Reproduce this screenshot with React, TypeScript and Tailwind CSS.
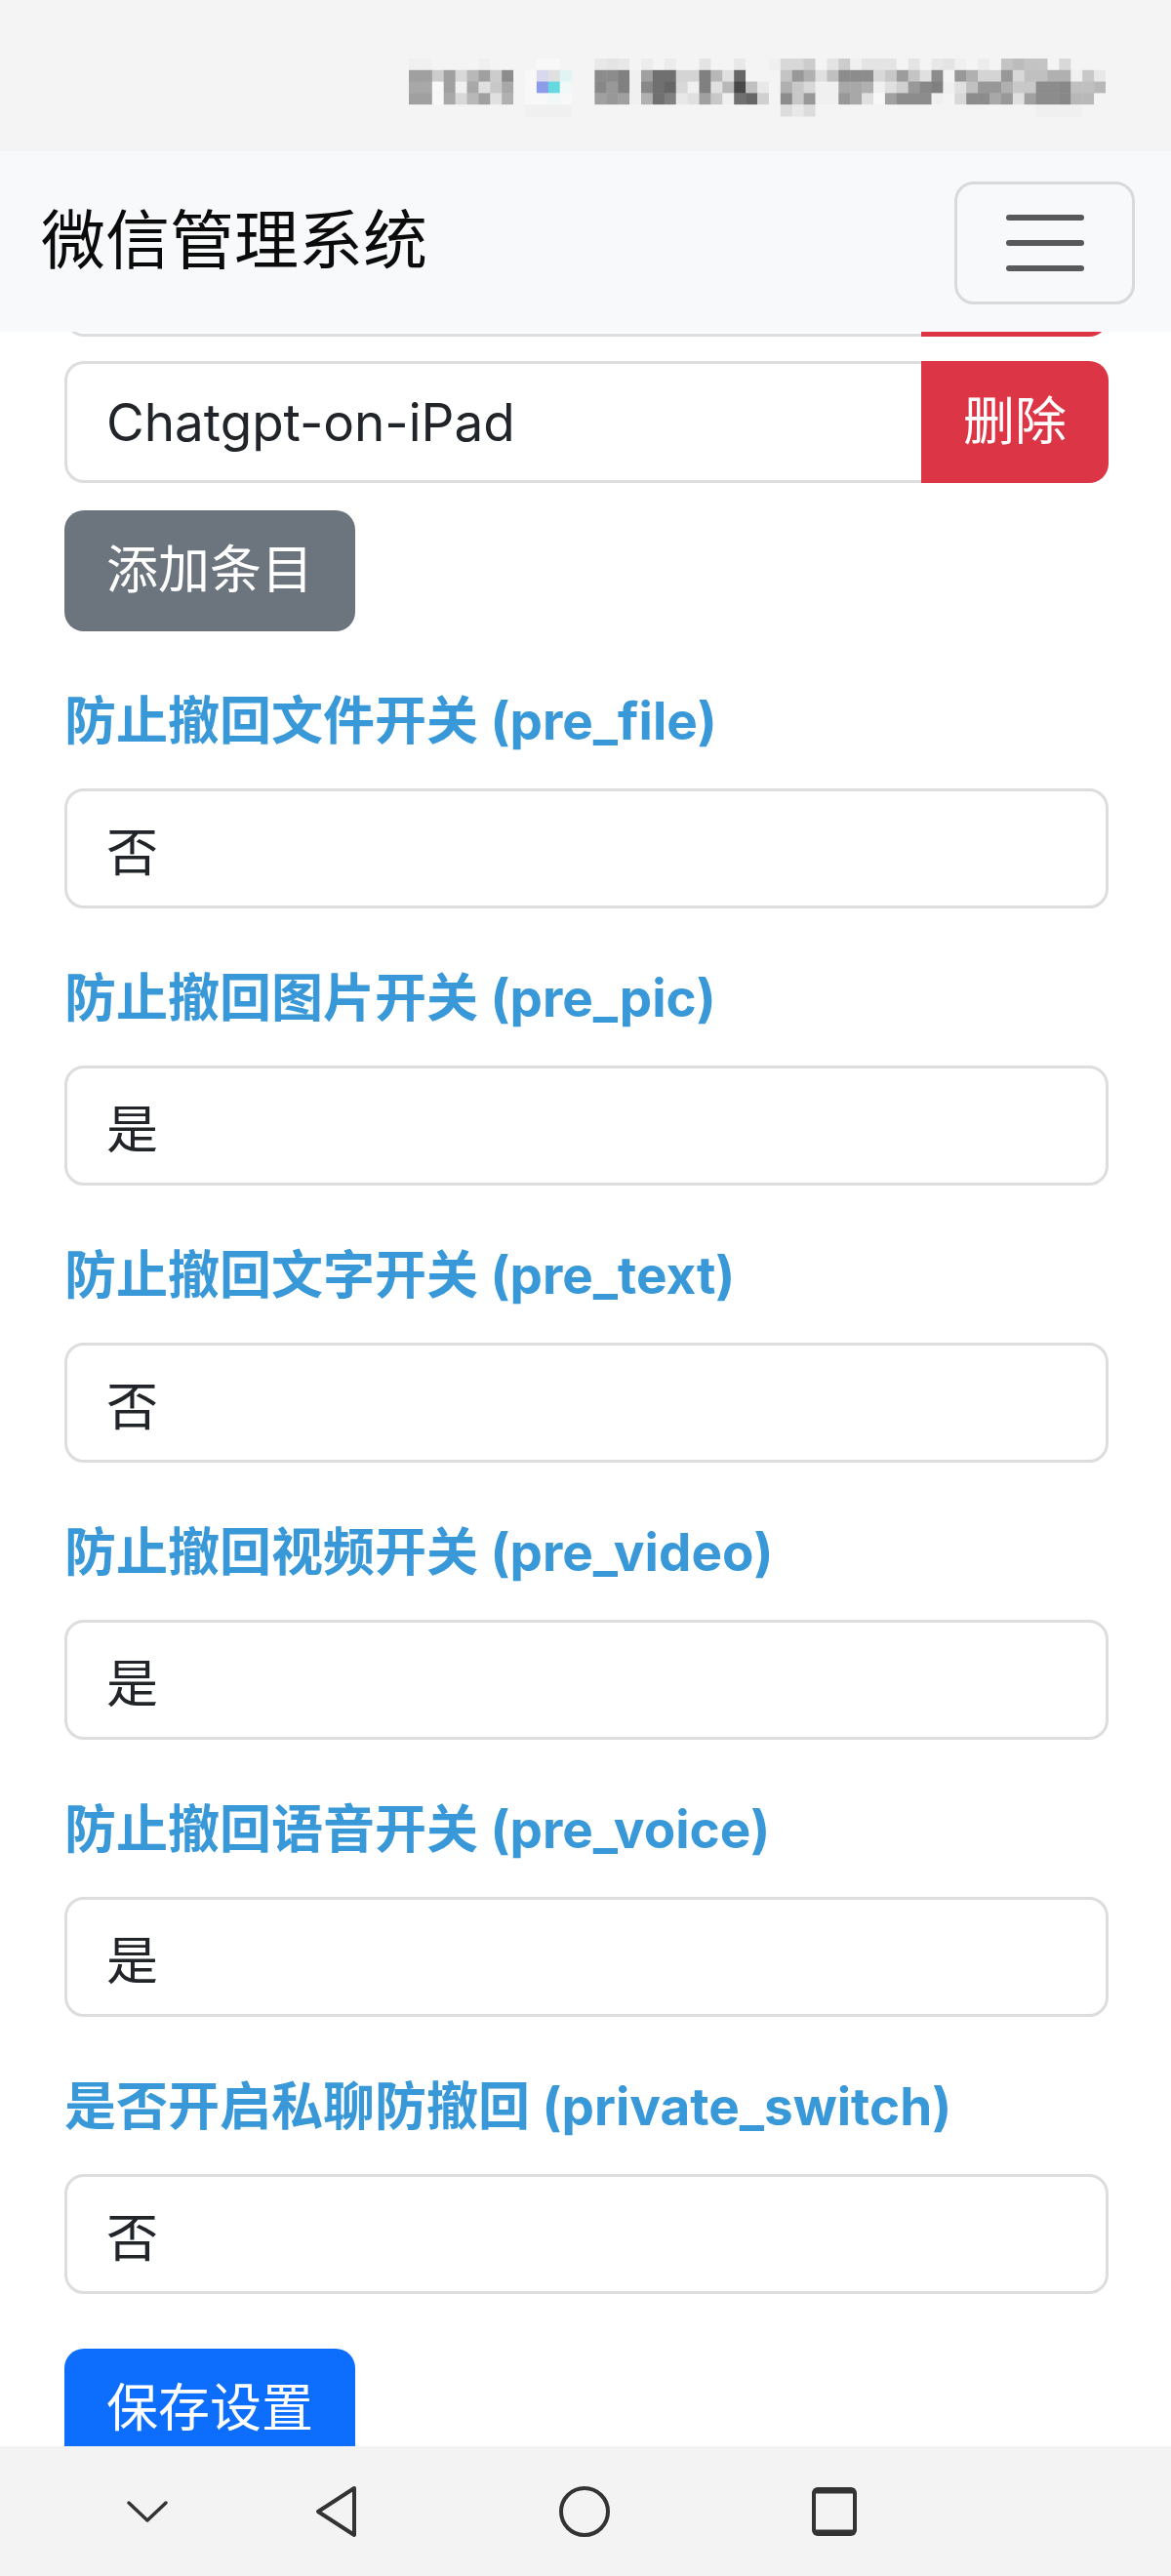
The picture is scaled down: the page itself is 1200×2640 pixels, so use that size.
const MOSAIC = [
  "f0 f0 f4 f4 f4 f4 f0 f4 f4 f4 f4 f8 f8 f4 f4 f4 e8 e4 e8 f4 ec f4 ec f4 f4 e4 f4 f4 e8 f4 f4 f0 d8 d8 cc f4 e4 cc f0 e4 e4 e4 f4 e4 f4 e8 e4 f0 f4 ec f4 c4 bc c4 c4 f4 d8 f4 f4 f4 f4",
  "a0 a0 cc a0 d8 b8 a0 cc 8c f4 f8 d8d8ee e0 e0f4f4 f4 f4 8c 8c 80 f0 a0 70 70 d4 d4 80 b8 e0 66 f4 f4 f4 c4 98 b0 e0 c0 8c 8c 8c d8 c8 9c c4 e0 8c f4 98 b0 d4 d4 98 d8 c0 c0 b0 b0 f0 c8 e8 f4",
  "a8 a8 f8 a0 f0 a8 e0 c8 a8 f4 f8 8c9ce8 66d8e0 f0f8f8 f4 f4 88 98 80 f0 88 70 66 d8 f0 80 e0 b8 48 c0 e8 f4 b0 c8 d8 f0 f0 a8 a8 b0 f0 e0 d0 98 88 80 f0 e0 c0 98 98 b0 c8 c8 8c 8c 88 c0 c0 b8 f4",
  "a0 a0 f8 a8 d8 b8 a0 e0 b0 f4 f8 f8 f0f8f8 f8 f4 f4 a0 98 a0 f0 b0 70 80 e8 e0 a0 c8 f0 70 66 d0 f4 8c c8 98 f0 f0 98 a8 e0 f8 a0 8c 8c 8c f0 f4 d8 8c 8c a8 98 e0 a0 8c 8c 88 b8 b8 f4 f4",
  "f4 f4 f4 f4 f4 f4 f4 f4 f4 f4 f0 f0 f0 f0 f4 f4 f4 f4 f4 f4 f4 f4 f4 f4 f4 f4 f4 f4 f4 f4 f4 f4 dc e8 dc f4 f4 f4 f4 f4 f4 f4 f4 f4 f4 f4 f4 f4 f4 f4 f4 f4 f4 f4 f0 f0 f0 f0 f4 f4 f4",
];

function hex(t: string) {
  return t.length === 2 ? `#${t}${t}${t}` : `#${t}`;
}

function BlurredStatus() {
  const cell = 11.9;
  return (
    <svg width="730" height="62" viewBox="0 0 730 62" className="block">
      {MOSAIC.map((row, r) =>
        row.split(" ").map((t, i) => (
          <rect
            key={`${r}-${i}`}
            x={i * cell}
            y={r * 11.8}
            width={cell + 0.5}
            height={12.3}
            fill={hex(t)}
          />
        ))
      )}
    </svg>
  );
}

const font = "font-['Inter','Noto_Sans_CJK_SC',sans-serif]";

const fields = [
  { label: "防止撤回文件开关 (pre_file)", value: "否" },
  { label: "防止撤回图片开关 (pre_pic)", value: "是" },
  { label: "防止撤回文字开关 (pre_text)", value: "否" },
  { label: "防止撤回视频开关 (pre_video)", value: "是" },
  { label: "防止撤回语音开关 (pre_voice)", value: "是" },
  { label: "是否开启私聊防撤回 (private_switch)", value: "否" },
];

function InputGroup({ value, action }: { value: string; action: string }) {
  return (
    <div className="flex h-[125px] w-full">
      <input
        readOnly
        value={value}
        className={`${font} flex-1 min-w-0 h-full border-[3px] border-r-0 border-[#dcdddf] rounded-l-[20px] bg-white pl-[40px] text-[53px] text-[#212529] outline-none`}
      />
      <button
        className={`${font} w-[192px] h-full bg-[#dc3545] rounded-r-[20px] text-white text-[53px]`}
      >
        {action}
      </button>
    </div>
  );
}

function Field({ label, value }: { label: string; value: string }) {
  return (
    <div className="flex flex-col">
      <label
        className={`${font} h-[80px] flex items-center text-[53px] font-bold text-[#3898d8] leading-none`}
      >
        {label}
      </label>
      <input
        readOnly
        value={value}
        className={`${font} mt-[29px] mb-[52px] h-[123px] w-full border-[3px] border-[#dcdddf] rounded-[20px] bg-white pl-[40px] text-[53px] text-[#212529] outline-none`}
      />
    </div>
  );
}

export default function App() {
  return (
    <div className={`${font} w-[1200px] h-[2640px] flex flex-col overflow-hidden bg-white`}>
      {/* status bar */}
      <div className="h-[155px] shrink-0 bg-[#f4f4f4] flex items-start pl-[419px] pt-[60px]">
        <BlurredStatus />
      </div>

      {/* navbar */}
      <div className="h-[185px] shrink-0 bg-[#f8f9fa] flex items-center justify-between pl-[42px] pr-[37px]">
        <span className="text-[66px] leading-none text-[#0b0b0b] font-['Noto_Sans_CJK_SC',sans-serif] -mt-[14px]">
          微信管理系统
        </span>
        <button className="w-[185px] h-[126px] mt-[2px] border-[3px] border-[#d8d9da] rounded-[20px] flex flex-col items-center justify-center gap-[20px]">
          <span className="block w-[80px] h-[6px] rounded-full bg-[#58595b]" />
          <span className="block w-[80px] h-[6px] rounded-full bg-[#58595b]" />
          <span className="block w-[80px] h-[6px] rounded-full bg-[#58595b]" />
        </button>
      </div>

      {/* content */}
      <div className="flex-1 min-h-0 overflow-hidden pl-[66px] pr-[64px]">
        <div className="h-[5px] overflow-hidden flex flex-col justify-end">
          <div className="shrink-0">
            <InputGroup value="" action="" />
          </div>
        </div>
        <div className="mt-[25px]">
          <InputGroup value="Chatgpt-on-iPad" action="删除" />
        </div>
        <button className="mt-[28px] mb-[52px] w-[298px] h-[124px] rounded-[20px] bg-[#6c757d] text-white text-[53px]">
          添加条目
        </button>
        {fields.map((f) => (
          <Field key={f.label} label={f.label} value={f.value} />
        ))}
        <button className="mt-[4px] w-[298px] h-[124px] rounded-[20px] bg-[#0d6efd] text-white text-[53px]">
          保存设置
        </button>
      </div>

      {/* system nav bar */}
      <div className="h-[133px] shrink-0 bg-[#f3f3f3] flex items-center pl-[129px]">
        <svg width="44" height="26" viewBox="0 0 44 26" fill="none" stroke="#333" strokeWidth="3.5" strokeLinecap="round" strokeLinejoin="round">
          <polyline points="3,4 22,22 41,4" />
        </svg>
        <svg className="ml-[148px]" width="48" height="56" viewBox="0 0 48 56" fill="none" stroke="#333" strokeWidth="4" strokeLinejoin="round">
          <path d="M42 4 L5 28 L42 52 Z" />
        </svg>
        <svg className="ml-[202px]" width="56" height="56" viewBox="0 0 56 56" fill="none" stroke="#333" strokeWidth="4">
          <circle cx="28" cy="28" r="24" />
        </svg>
        <svg className="ml-[202px]" width="52" height="52" viewBox="0 0 52 52" fill="none" stroke="#333" strokeWidth="4">
          <rect x="5" y="3" width="42" height="46" rx="4" />
          <line x1="5" y1="5" x2="47" y2="5" strokeWidth="5" />
          <line x1="5" y1="47" x2="47" y2="47" strokeWidth="5" />
        </svg>
      </div>
    </div>
  );
}
